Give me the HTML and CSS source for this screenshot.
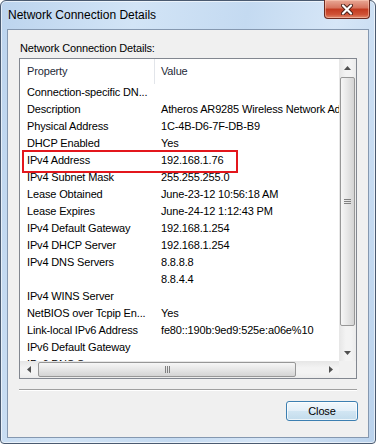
FILE: index.html
```html
<!DOCTYPE html>
<html>
<head>
    <title>Network Connection Details</title>
    <link rel="stylesheet" href="styles.css">
</head>
<body>
    <div class="window">
        <div class="titlebar">
            <span class="title">Network Connection Details</span>
            <div class="close-x">
                <svg width="12" height="11" viewBox="0 0 12 11">
                    <path d="M2 1.5 L10 9.5 M10 1.5 L2 9.5" stroke="#4a2018" stroke-width="4" stroke-linecap="round"/>
                    <path d="M2 1.5 L10 9.5 M10 1.5 L2 9.5" stroke="#ffffff" stroke-width="2.2" stroke-linecap="round"/>
                </svg>
            </div>
        </div>
        <div class="client">
            <div class="caption">Network Connection Details:</div>
            <div class="listview">
                <div class="viewport">
                    <div class="rows">
                        <div class="head">Property</div><div class="head head-value">Value</div>
                        <div class="cell">Connection-specific DN...</div><div class="cell value"></div>
                        <div class="cell">Description</div><div class="cell value">Atheros AR9285 Wireless Network Adapter</div>
                        <div class="cell">Physical Address</div><div class="cell value">1C-4B-D6-7F-DB-B9</div>
                        <div class="cell">DHCP Enabled</div><div class="cell value">Yes</div>
                        <div class="cell">IPv4 Address</div><div class="cell value">192.168.1.76</div>
                        <div class="cell">IPv4 Subnet Mask</div><div class="cell value">255.255.255.0</div>
                        <div class="cell">Lease Obtained</div><div class="cell value">June-23-12 10:56:18 AM</div>
                        <div class="cell">Lease Expires</div><div class="cell value">June-24-12 1:12:43 PM</div>
                        <div class="cell">IPv4 Default Gateway</div><div class="cell value">192.168.1.254</div>
                        <div class="cell">IPv4 DHCP Server</div><div class="cell value">192.168.1.254</div>
                        <div class="cell">IPv4 DNS Servers</div><div class="cell value">8.8.8.8</div>
                        <div class="cell"></div><div class="cell value">8.8.4.4</div>
                        <div class="cell">IPv4 WINS Server</div><div class="cell value"></div>
                        <div class="cell">NetBIOS over Tcpip En...</div><div class="cell value">Yes</div>
                        <div class="cell">Link-local IPv6 Address</div><div class="cell value">fe80::190b:9ed9:525e:a06e%10</div>
                        <div class="cell">IPv6 Default Gateway</div><div class="cell value"></div>
                        <div class="cell">IPv6 DNS Server</div><div class="cell value"></div>
                    </div>
                    <div class="highlight"></div>
                </div>
                <div class="vscroll">
                    <div class="arrow">
                        <svg width="7" height="4" viewBox="0 0 7 4"><polygon points="0,4 7,4 3.5,0" fill="#505050"/></svg>
                    </div>
                    <div class="track">
                        <div class="thumb-v">
                            <svg width="7" height="5" viewBox="0 0 7 5">
                                <path d="M0 0.5 H7 M0 2.5 H7 M0 4.5 H7" stroke="#808080" stroke-width="1"/>
                            </svg>
                        </div>
                    </div>
                    <div class="arrow">
                        <svg width="7" height="4" viewBox="0 0 7 4"><polygon points="0,0 7,0 3.5,4" fill="#505050"/></svg>
                    </div>
                </div>
                <div class="hscroll">
                    <div class="arrow">
                        <svg width="4" height="7" viewBox="0 0 4 7"><polygon points="4,0 4,7 0,3.5" fill="#505050"/></svg>
                    </div>
                    <div class="track-h">
                        <div class="thumb-h">
                            <svg width="5" height="7" viewBox="0 0 5 7">
                                <path d="M0.5 0 V7 M2.5 0 V7 M4.5 0 V7" stroke="#808080" stroke-width="1"/>
                            </svg>
                        </div>
                    </div>
                    <div class="arrow">
                        <svg width="4" height="7" viewBox="0 0 4 7"><polygon points="0,0 0,7 4,3.5" fill="#505050"/></svg>
                    </div>
                </div>
                <div class="corner"></div>
            </div>
            <div class="separator"></div>
            <div class="actions">
                <button class="btn" type="button">Close</button>
            </div>
        </div>
    </div>
</body>
</html>
```

FILE: styles.css
```css
body {
    margin: 0;
    font-family: "Liberation Sans", Arial, sans-serif;
    background-color: #ffffff;
}

.window {
    box-sizing: border-box;
    width: 376px;
    height: 444px;
    border: 1px solid #4a5a70;
    border-radius: 6px 6px 4px 4px;
    padding: 0 6px 5px 6px;
    display: flex;
    flex-direction: column;
    background: linear-gradient(100deg, #bcd4ee 0%, #d2e4f6 30%, #c4daf1 55%, #d6e6f7 75%, #bad2ec 100%);
    box-shadow: inset 0 0 0 1px rgba(255, 255, 255, 0.6);
}

.titlebar {
    height: 28px;
    display: flex;
    justify-content: space-between;
    align-items: flex-start;
    margin-right: -1px;
}

.title {
    font-size: 12px;
    line-height: 28px;
    color: #000;
    padding-left: 1px;
}

.close-x {
    box-sizing: border-box;
    width: 46px;
    height: 19px;
    margin-top: -1px;
    border: 1px solid #6b2a20;
    border-top: none;
    border-radius: 0 0 4px 4px;
    display: flex;
    align-items: center;
    justify-content: center;
    background: linear-gradient(#e8a896, #d6725c 45%, #c2391f 50%, #cf5236 80%, #e08a6e);
    box-shadow: inset 0 0 0 1px rgba(255, 210, 190, 0.5);
}

.client {
    flex: 1;
    border: 1px solid #8598b0;
    background-color: #f0f0f0;
    display: flex;
    flex-direction: column;
    font-size: 11px;
    letter-spacing: -0.15px;
    color: #000;
}

.caption {
    padding: 11px 0 0 12px;
    line-height: 14px;
}

.listview {
    margin: 3px 11px 0 11px;
    height: 321px;
    box-sizing: border-box;
    border: 1px solid #828790;
    background-color: #fff;
    display: grid;
    grid-template-columns: 1fr 17px;
    grid-template-rows: 1fr 17px;
}

.viewport {
    position: relative;
    overflow: hidden;
}

.rows {
    display: grid;
    grid-template-columns: 134px 320px;
    grid-template-rows: 25px;
    grid-auto-rows: 17px;
}

.head {
    line-height: 25px;
    padding-left: 7px;
    color: #1e2a38;
    white-space: nowrap;
}

.head-value {
    border-left: 1px solid #e2e5ea;
    padding-left: 6px;
}

.cell {
    line-height: 17px;
    padding-left: 7px;
    white-space: nowrap;
    overflow: hidden;
}

.highlight {
    position: absolute;
    left: 2px;
    top: 91px;
    width: 216px;
    height: 23px;
    box-sizing: border-box;
    border: 2px solid #e3161c;
}

.vscroll {
    display: flex;
    flex-direction: column;
    background: linear-gradient(to right, #e6e6e6, #f3f3f3 40%, #f3f3f3 70%, #ebebeb);
}

.hscroll {
    display: flex;
    background: linear-gradient(#e6e6e6, #f3f3f3 40%, #f3f3f3 70%, #ebebeb);
}

.arrow {
    width: 17px;
    height: 17px;
    flex: none;
    display: flex;
    align-items: center;
    justify-content: center;
}

.track {
    flex: 1;
    padding-top: 1px;
}

.thumb-v {
    box-sizing: border-box;
    height: 249px;
    margin: 0 1px;
    border: 1px solid #979797;
    border-radius: 2px;
    background: linear-gradient(to right, #f6f6f6, #e6e6e6 50%, #d4d4d4);
    display: flex;
    align-items: center;
    justify-content: center;
}

.track-h {
    flex: 1;
    padding-left: 1px;
}

.thumb-h {
    box-sizing: border-box;
    width: 258px;
    height: 15px;
    margin-top: 1px;
    border: 1px solid #979797;
    border-radius: 2px;
    background: linear-gradient(#f6f6f6, #e6e6e6 50%, #d4d4d4);
    display: flex;
    align-items: center;
    justify-content: center;
}

.corner {
    background-color: #f0f0f0;
}

.separator {
    margin: 10px 11px 0 11px;
    height: 1px;
    background-color: #a0a0a0;
    border-bottom: 1px solid #ffffff;
}

.actions {
    display: flex;
    justify-content: flex-end;
    padding: 10px 10px 0 0;
}

.btn {
    width: 72px;
    height: 20px;
    padding: 0;
    border: 1px solid #3c7fb1;
    border-radius: 3px;
    background: linear-gradient(#f2f8fc, #e3eff8 50%, #d2e6f3 50%, #c3dcec);
    box-shadow: inset 0 0 0 1px rgba(255, 255, 255, 0.7);
    font-family: "Liberation Sans", Arial, sans-serif;
    font-size: 11px;
    letter-spacing: -0.15px;
    color: #000;
}
```
